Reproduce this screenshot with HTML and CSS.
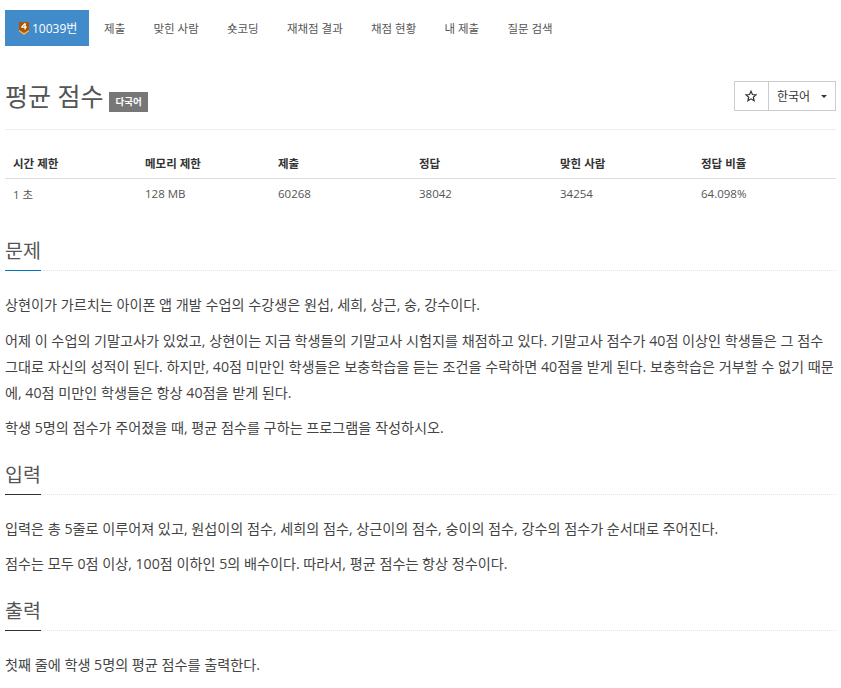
FILE: index.html
```html
<!DOCTYPE html>
<html lang="ko">
<head>
    <meta charset="UTF-8">
    <title>평균 점수</title>
    <link rel="stylesheet" href="styles.css">
</head>
<body>
<div class="container">
    <ul class="tabs">
        <li class="active">
            <svg class="tier" width="10" height="13" viewBox="0 0 10 13">
                <path d="M0 0H10V9.5L5 13L0 9.5Z" fill="#ad5600"/>
                <path d="M0 8L5 11L10 8V9.5L5 13L0 9.5Z" fill="#f0b070"/>
                <path d="M5.4 1.2H6.8V4.6H7.8V5.8H6.8V7.4H5.4V5.8H2.2V4.7ZM5.4 4.6V3L3.7 4.6Z" fill="#fff"/>
            </svg>10039번
        </li>
        <li>제출</li>
        <li>맞힌 사람</li>
        <li>숏코딩</li>
        <li>재채점 결과</li>
        <li>채점 현황</li>
        <li>내 제출</li>
        <li>질문 검색</li>
    </ul>

    <div class="page-header">
        <h1>평균 점수 <span class="label">다국어</span></h1>
        <div class="btn-group">
            <span class="btn">
                <svg width="12" height="12" viewBox="0 0 24 24"><path d="M12 2.5L14.9 9L22 9.7L16.6 14.4L18.2 21.4L12 17.7L5.8 21.4L7.4 14.4L2 9.7L9.1 9Z" fill="none" stroke="#333" stroke-width="2.4"/></svg>
            </span>
            <span class="btn">한국어<i class="caret"></i></span>
        </div>
    </div>

    <table class="info">
        <thead>
        <tr>
            <th class="c0">시간 제한</th>
            <th class="c1">메모리 제한</th>
            <th class="c2">제출</th>
            <th class="c2">정답</th>
            <th class="c2">맞힌 사람</th>
            <th>정답 비율</th>
        </tr>
        </thead>
        <tbody>
        <tr>
            <td>1 초</td>
            <td>128 MB</td>
            <td>60268</td>
            <td>38042</td>
            <td>34254</td>
            <td>64.098%</td>
        </tr>
        </tbody>
    </table>

    <div class="headline problem"><h2>문제</h2></div>
    <div class="text">
        <p>상현이가 가르치는 아이폰 앱 개발 수업의 수강생은 원섭, 세희, 상근, 숭, 강수이다.</p>
        <p>어제 이 수업의 기말고사가 있었고, 상현이는 지금 학생들의 기말고사 시험지를 채점하고 있다. 기말고사 점수가 40점 이상인 학생들은 그 점수 그대로 자신의 성적이 된다. 하지만, 40점 미만인 학생들은 보충학습을 듣는 조건을 수락하면 40점을 받게 된다. 보충학습은 거부할 수 없기 때문에, 40점 미만인 학생들은 항상 40점을 받게 된다.</p>
        <p>학생 5명의 점수가 주어졌을 때, 평균 점수를 구하는 프로그램을 작성하시오.</p>
    </div>

    <div class="headline"><h2>입력</h2></div>
    <div class="text">
        <p>입력은 총 5줄로 이루어져 있고, 원섭이의 점수, 세희의 점수, 상근이의 점수, 숭이의 점수, 강수의 점수가 순서대로 주어진다.</p>
        <p>점수는 모두 0점 이상, 100점 이하인 5의 배수이다. 따라서, 평균 점수는 항상 정수이다.</p>
    </div>

    <div class="headline"><h2>출력</h2></div>
    <div class="text">
        <p>첫째 줄에 학생 5명의 평균 점수를 출력한다.</p>
    </div>
</div>
</body>
</html>
```

FILE: styles.css
```css
*{
    box-sizing: border-box;
    margin: 0;
    padding: 0;
}
html{
    height: 688px;
    overflow: hidden;
}
body{
    font-family: "Open Sans", "Noto Sans CJK KR", sans-serif;
    font-size: 13px;
    color: #333;
    background-color: #fff;
}
.container{
    padding: 10px 5px 0;
}
ul{
    list-style: none;
}
/* 상단 탭 */
.tabs{
    display: flex;
    height: 36px;
}
.tabs li{
    display: flex;
    align-items: center;
    padding: 0 14.1px;
    font-size: 11.5px;
    white-space: nowrap;
    color: #555;
}
.tabs li.active{
    background-color: #428bca;
    color: #fff;
    font-size: 12px;
    padding: 0 0 0 14px;
    width: 84px;
    margin-right: 1px;
}
.tier{
    margin-right: 3px;
    flex: none;
}
/* 제목 */
.page-header{
    display: flex;
    justify-content: space-between;
    margin-top: 35px;
    padding-bottom: 13px;
    border-bottom: 1px solid #eee;
}
h1{
    font-size: 25px;
    font-weight: 400;
    line-height: 30px;
    color: #555;
    height: 35px;
}
.label{
    display: inline-block;
    background-color: #777;
    color: #fff;
    font-size: 9.5px;
    font-weight: 700;
    line-height: 12px;
    padding: 4px 6.5px;
    vertical-align: 1px;
    margin-left: -1px;
}
.btn-group{
    display: flex;
    height: 30px;
    border: 1px solid #ccc;
}
.btn{
    display: flex;
    align-items: center;
    padding: 0 8px;
    font-size: 12px;
}
.btn:first-child{
    width: 34px;
    justify-content: center;
    border-right: 1px solid #ccc;
}
.caret{
    width: 0;
    height: 0;
    margin-left: 11px;
    border-top: 3px solid #333;
    border-left: 3px solid transparent;
    border-right: 3px solid transparent;
}
/* 문제 정보 */
.info{
    width: 100%;
    margin-top: 19px;
    border-collapse: collapse;
    table-layout: fixed;
    font-size: 11.5px;
}
.info th{
    text-align: left;
    padding: 0 8px;
    height: 29px;
    font-weight: 700;
    color: #333;
    border-bottom: 1px solid #ddd;
}
.info td{
    padding: 0 8px;
    height: 31px;
    color: #555;
}
.c0{
    width: 132px;
}
.c1{
    width: 133px;
}
.c2{
    width: 141px;
}
/* 본문 */
.headline{
    margin-top: 21.7px;
    height: 32px;
    border-bottom: 1px dotted #e5e5e5;
}
.headline.problem{
    margin-top: 30px;
}
h2{
    display: inline-block;
    font-size: 19.5px;
    font-weight: 400;
    line-height: 24px;
    height: 32px;
    color: #555;
    border-bottom: 1px solid #333;
}
.problem h2{
    border-bottom-color: #0076c0;
}
.text{
    margin-top: 21px;
    font-size: 14.15px;
    line-height: 26px;
    color: #444;
}
.text p{
    margin-bottom: 9.5px;
}
```
